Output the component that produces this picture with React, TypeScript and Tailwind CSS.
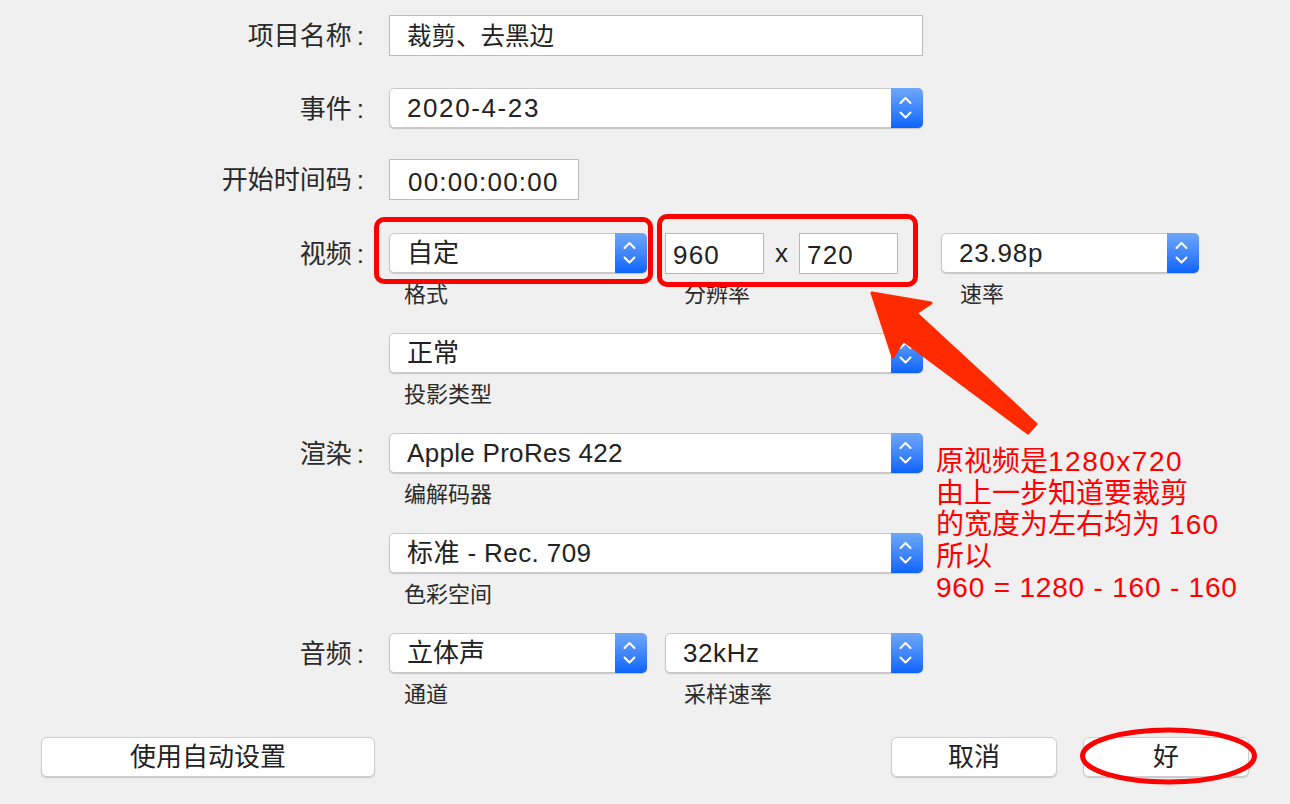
import React from "react";

const FONT = '"Liberation Sans", "Noto Sans CJK SC", sans-serif';

function Stepper() {
  return (
    <div className="absolute right-[-1px] top-[-1px] bottom-[-1px] w-[32px] rounded-r-[5px] bg-gradient-to-b from-[#6ea7f8] to-[#0a63fc]">
      <svg width="32" height="41" viewBox="0 0 32 41" className="block">
        <polyline points="9.5,15 14.5,10 19.5,15" fill="none" stroke="#fff" strokeWidth="2" strokeLinecap="round" strokeLinejoin="round" />
        <polyline points="9.5,24.5 14.5,29.5 19.5,24.5" fill="none" stroke="#fff" strokeWidth="2" strokeLinecap="round" strokeLinejoin="round" />
      </svg>
    </div>
  );
}

function Popup({ value, w, track = "" }: { value: string; w: string; track?: string }) {
  return (
    <div className={`relative ${w} h-[40px] shrink-0 rounded-[5px] bg-white border border-[#c9c9c9] shadow-[0_1px_1px_rgba(0,0,0,0.18)] flex items-center pl-[17px] text-[26px] text-[#222]`}>
      <span className={`leading-none ${track}`}>{value}</span>
      <Stepper />
    </div>
  );
}

function Field({ value, w, pl, size = "text-[26px]", track = "" }: { value: string; w: string; pl: string; size?: string; track?: string }) {
  return (
    <div className={`${w} h-[41px] shrink-0 bg-white border border-[#b9b9b9] flex items-center pt-[4px] ${pl} ${size} text-[#222]`}>
      <span className={`leading-none ${track}`}>{value}</span>
    </div>
  );
}

function Label({ text }: { text: string }) {
  return (
    <div className="w-[389px] shrink-0 pr-[25px] h-[40px] pt-[2px] flex items-center justify-end text-[26px] text-[#2a2a2a]">
      <span>{text}</span>
      <span className="ml-[5px]">:</span>
    </div>
  );
}

function Sub({ text, pl }: { text: string; pl: string }) {
  return <div className={`mt-[10px] ${pl} text-[22px] leading-[24px] text-[#2a2a2a]`}>{text}</div>;
}

const btn =
  "h-[40px] rounded-[6px] bg-white border border-[#cfcfcf] shadow-[0_1px_1px_rgba(0,0,0,0.18)] text-[26px] text-[#222] leading-none";

export default function App() {
  return (
    <div className="relative w-[1290px] h-[804px] bg-[#f0f0f0] overflow-hidden" style={{ fontFamily: FONT }}>
      <div className="flex flex-col pt-[15px]">
        {/* 项目名称 */}
        <div className="flex items-center h-[41px]">
          <Label text="项目名称" />
          <Field value="裁剪、去黑边" w="w-[534px]" pl="pl-[17px]" size="text-[24.5px]" />
        </div>
        {/* 事件 */}
        <div className="flex items-center h-[40px] mt-[32px]">
          <Label text="事件" />
          <Popup value="2020-4-23" w="w-[534px]" track="tracking-[1.6px]" />
        </div>
        {/* 开始时间码 */}
        <div className="flex items-center h-[41px] mt-[31px]">
          <Label text="开始时间码" />
          <Field value="00:00:00:00" w="w-[190px]" pl="pl-[18px]" track="tracking-[1.2px]" />
        </div>
        {/* 视频 */}
        <div className="flex items-start mt-[33px]">
          <Label text="视频" />
          <div className="flex flex-col">
            <Popup value="自定" w="w-[258px]" />
            <Sub text="格式" pl="pl-[15px]" />
          </div>
          <div className="flex flex-col ml-[18px]">
            <div className="flex items-center h-[40px]">
              <Field value="960" w="w-[99px]" pl="pl-[7px]" track="tracking-[1.2px]" />
              <div className="w-[35px] text-center text-[26px] text-[#222] leading-none">x</div>
              <Field value="720" w="w-[99px]" pl="pl-[7px]" track="tracking-[1.2px]" />
            </div>
            <Sub text="分辨率" pl="pl-[19px]" />
          </div>
          <div className="flex flex-col ml-[43px]">
            <Popup value="23.98p" w="w-[258px]" track="tracking-[0.8px]" />
            <Sub text="速率" pl="pl-[19px]" />
          </div>
        </div>
        {/* 投影类型 */}
        <div className="flex items-start mt-[26px]">
          <div className="w-[389px] shrink-0" />
          <div className="flex flex-col">
            <Popup value="正常" w="w-[534px]" />
            <Sub text="投影类型" pl="pl-[15px]" />
          </div>
        </div>
        {/* 渲染 */}
        <div className="flex items-start mt-[26px]">
          <Label text="渲染" />
          <div className="flex flex-col">
            <Popup value="Apple ProRes 422" w="w-[534px]" track="tracking-[0.3px]" />
            <Sub text="编解码器" pl="pl-[15px]" />
          </div>
        </div>
        {/* 色彩空间 */}
        <div className="flex items-start mt-[26px]">
          <div className="w-[389px] shrink-0" />
          <div className="flex flex-col">
            <Popup value="标准 - Rec. 709" w="w-[534px]" track="tracking-[0.4px]" />
            <Sub text="色彩空间" pl="pl-[15px]" />
          </div>
        </div>
        {/* 音频 */}
        <div className="flex items-start mt-[26px]">
          <Label text="音频" />
          <div className="flex flex-col">
            <Popup value="立体声" w="w-[258px]" />
            <Sub text="通道" pl="pl-[15px]" />
          </div>
          <div className="flex flex-col ml-[18px]">
            <Popup value="32kHz" w="w-[258px]" track="tracking-[0.6px]" />
            <Sub text="采样速率" pl="pl-[19px]" />
          </div>
        </div>
        {/* buttons */}
        <div className="flex items-center mt-[30px] pl-[41px]">
          <button className={`w-[334px] ${btn}`}>使用自动设置</button>
          <button className={`ml-[516px] w-[166px] ${btn}`}>取消</button>
          <button className={`ml-[26px] w-[166px] ${btn}`}>好</button>
        </div>
      </div>

      {/* annotations */}
      <div className="absolute left-[374px] top-[217px] w-[279px] h-[67px] rounded-[10px] border-[5px] border-[#ff0000]" />
      <div className="absolute left-[657px] top-[214px] w-[261px] h-[73px] rounded-[10px] border-[5px] border-[#ff0000]" />

      <svg className="absolute left-0 top-0" width="1290" height="804" viewBox="0 0 1290 804">
        <polygon
          points="872,293 931,303 916,313 1036,424 1028,433 903,340 893,357"
          fill="#ff2a00"
          stroke="#ff2a00"
          strokeWidth="3"
          strokeLinejoin="round"
        />
        <ellipse cx="1168.5" cy="756" rx="86" ry="26" fill="none" stroke="#ff0000" strokeWidth="5" />
      </svg>

      <div className="absolute left-[936px] top-[446px] text-[28px] leading-[31.5px] text-[#ff0000] whitespace-pre">
        <div>原视频是<span className="tracking-[1.5px]">1280x720</span></div>
        <div>由上一步知道要裁剪</div>
        <div>的宽度为左右均为<span className="tracking-[1.2px]"> 160</span></div>
        <div>所以</div>
        <div className="tracking-[0.8px]">960 = 1280 - 160 - 160</div>
      </div>
    </div>
  );
}
